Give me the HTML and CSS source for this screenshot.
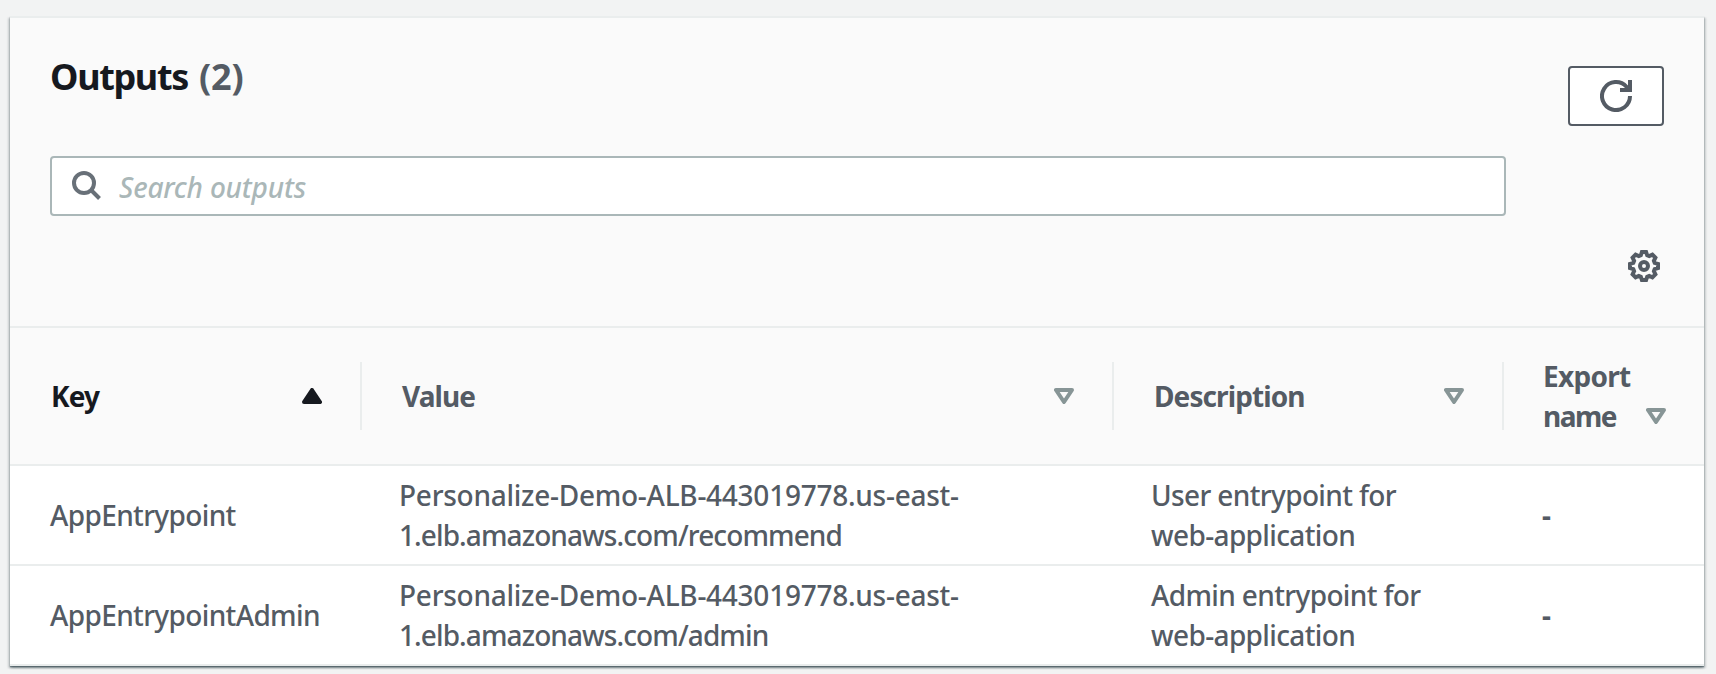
FILE: index.html
```
<!DOCTYPE html>
<html lang="en">
<head>
<meta charset="utf-8">
<title>Outputs</title>
<link rel="stylesheet" href="styles.css">
</head>
<body>
<main class="panel">
  <header class="panel-header">
    <div class="title-row">
      <div class="title-col">
        <h2 class="title"><span class="title-text">Outputs</span><span class="count">(2)</span></h2>
        <div class="search">
          <svg class="search-icon" width="32" height="32" viewBox="0 0 32 32"><circle cx="13" cy="13" r="10" /><path d="M20 20L28.5 28.5" /></svg>
          <span class="placeholder">Search outputs</span>
        </div>
      </div>
      <button class="refresh" aria-label="Refresh">
        <svg width="32" height="32" viewBox="0 0 32 32"><path d="M30 16A14 14 0 1 1 26.5 6.8L29 10" /><path d="M20 10H30V0" /></svg>
      </button>
    </div>
    <div class="prefs">
      <svg width="32" height="32" viewBox="0 0 32 32"><path d="M13.9 2H18.1L19.2 5.3L21.2 6.1L24.4 4.6L27.4 7.6L25.9 10.8L26.7 12.8L30 13.9V18.1L26.7 19.2L25.9 21.2L27.4 24.4L24.4 27.4L21.2 25.9L19.2 26.7L18.1 30H13.9L12.8 26.7L10.8 25.9L7.6 27.4L4.6 24.4L6.1 21.2L5.3 19.2L2 18.1V13.9L5.3 12.8L6.1 10.8L4.6 7.6L7.6 4.6L10.8 6.1L12.8 5.3Z" /><circle cx="16" cy="16" r="4" /></svg>
    </div>
  </header>
  <div class="row head">
    <div class="cell sorted"><span>Key</span><svg class="sort" width="20" height="16" viewBox="0 0 20 16"><path class="solid" d="M10 2L18 14H2Z" /></svg></div>
    <div class="cell"><span>Value</span><svg class="sort" width="20" height="16" viewBox="0 0 20 16"><path d="M2 2H18L10 14Z" /></svg></div>
    <div class="cell"><span>Description</span><svg class="sort" width="20" height="16" viewBox="0 0 20 16"><path d="M2 2H18L10 14Z" /></svg></div>
    <div class="cell export"><span>Export<br><span class="name">name</span></span><svg class="sort" width="20" height="16" viewBox="0 0 20 16"><path d="M2 2H18L10 14Z" /></svg></div>
  </div>
  <div class="row">
    <div class="cell">AppEntrypoint</div>
    <div class="cell"><span><span class="host">Personalize-Demo-ALB-443019778.us-east-</span><br><span class="path">1.elb.amazonaws.com/recommend</span></span></div>
    <div class="cell"><span>User entrypoint for<br>web-application</span></div>
    <div class="cell dash">-</div>
  </div>
  <div class="row">
    <div class="cell">AppEntrypointAdmin</div>
    <div class="cell"><span><span class="host">Personalize-Demo-ALB-443019778.us-east-</span><br><span class="path">1.elb.amazonaws.com/admin</span></span></div>
    <div class="cell"><span>Admin entrypoint for<br>web-application</span></div>
    <div class="cell dash">-</div>
  </div>
</main>
</body>
</html>
```
FILE: styles.css
```
* { box-sizing: border-box; }
body {
  margin: 0;
  height: 674px;
  padding: 16px 12px 8px 10px;
  overflow: hidden;
  background: #f2f3f3;
  color: #545b64;
  font: 500 28px/40px "Noto Sans", sans-serif;
}
svg { display: block; flex: none; fill: none; stroke: #545b64; stroke-width: 4; }
.panel {
  height: 650px;
  background: #fff;
  border-top: 2px solid #eaeded;
  box-shadow: 0 2px 2px 0 rgba(0, 28, 36, .3), 2px 2px 2px 0 rgba(0, 28, 36, .15), -2px 2px 2px 0 rgba(0, 28, 36, .15), 0 1px 1px 0 rgba(0, 28, 36, .3);
}
.panel-header {
  height: 310px;
  padding: 32px 40px 0;
  background: #fafafa;
  border-bottom: 2px solid #eaeded;
}
.title-row { display: flex; justify-content: space-between; height: 166px; }
.title { display: flex; margin: 0; height: 106px; font-size: 36px; line-height: 54px; color: #16191f; }
.title-text { width: 149px; letter-spacing: -1.35px; }
.count { color: #545b64; letter-spacing: -.1px; }
.search {
  display: flex;
  align-items: center;
  width: 1456px;
  height: 60px;
  padding-left: 19px;
  border: 2px solid #aab7b8;
  border-radius: 4px;
  background: #fff;
}
.search-icon { stroke: #687078; }
.placeholder { margin-left: 16px; padding-top: 2px; color: #aab7b8; font-style: italic; letter-spacing: -.2px; }
.refresh {
  display: flex;
  align-items: center;
  justify-content: center;
  width: 96px;
  height: 60px;
  margin-top: 16px;
  padding: 0;
  border: 2px solid #545b64;
  border-radius: 4px;
  background: #fff;
}
.prefs { display: flex; justify-content: flex-end; padding: 34px 4px 0 0; }
.row {
  display: grid;
  grid-template-columns: 352px 752px 390px 200px;
  height: 100px;
  border-bottom: 2px solid #eaeded;
}
.cell { display: flex; align-items: center; padding-left: 40px; letter-spacing: -.63px; }
.cell:nth-child(2) { padding-left: 37px; }
.cell:nth-child(3) { padding-left: 37px; }
.cell:nth-child(4) { padding-left: 38px; }
.head { height: 138px; align-items: center; background: #fafafa; font-weight: 700; }
.head .cell { height: 68px; justify-content: space-between; border-right: 2px solid #eaeded; padding: 0 38px 0 40px; letter-spacing: -.9px; }
.head .cell:first-child { padding-left: 41px; }
.head .export { border: 0; height: 80px; padding-left: 39px; letter-spacing: -.7px; }
.sorted { color: #16191f; }
.sort { stroke: #879596; stroke-linejoin: round; }
.solid { fill: #16191f; stroke: #16191f; }
.export .sort { margin-top: 40px; }
.name { letter-spacing: -1.5px; }
.host { letter-spacing: -.26px; }
.path { letter-spacing: -.9px; }
.dash { font-weight: 700; }
```
